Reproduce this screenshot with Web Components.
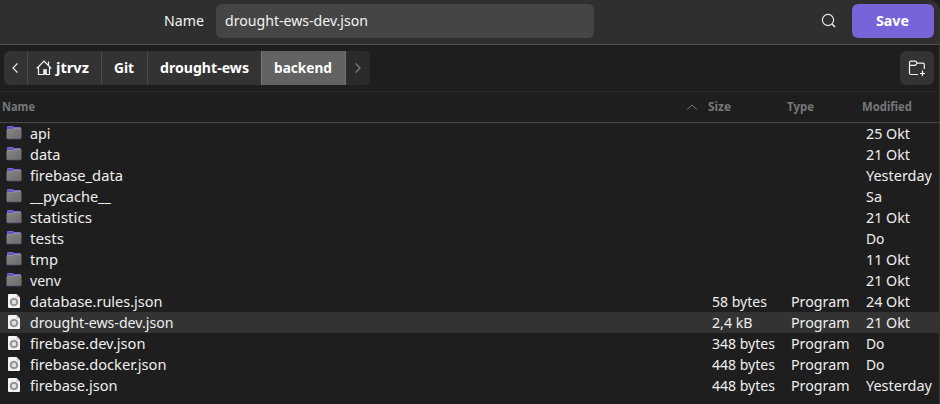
<!DOCTYPE html>
<html lang="en"><head><meta charset="utf-8"><title>Save file</title>
<style>html,body{margin:0;height:100%;overflow:hidden;background:#1e1e1e}body{font-family:"Noto Sans","Open Sans",sans-serif}</style></head>
<body><save-dialog></save-dialog>
<script>
const define=(name,html,init)=>{
  customElements.define(name,class extends HTMLElement{
    connectedCallback(){
      if(this.shadowRoot)return;
      this.attachShadow({mode:'open'}).innerHTML=typeof html==='function'?html(this):html;
      if(init)init(this);
    }
  });
};

/* Single-line label condensed or widened to the width in its w attribute */
define('fit-text',el=>`<style>:host{display:block;flex:none;width:${el.getAttribute('w')}px;white-space:nowrap}span{display:inline-block;transform-origin:0 50%}</style><span>${el.textContent}</span>`,el=>{
  const s=el.shadowRoot.querySelector('span');
  s.style.transform=`scaleX(${el.getAttribute('w')/s.getBoundingClientRect().width})`;
});

define('folder-icon',`<style>:host{display:block;width:16px;height:16px}svg{display:block}</style>
<svg width="16" height="16" viewBox="0 0 16 16"><defs><linearGradient id="g" x2="1" y2="1"><stop stop-color="#868686"/><stop offset="1" stop-color="#6b6b6b"/></linearGradient></defs>
<path d="M1 5V2Q1 1 2 1H6.8L8 2H14.2Q15 2 15 3V6H1Z" fill="#7764d8"/><path d="M1.5 3H7" stroke="#4a3da0" stroke-width=".8"/><path d="M.5 5Q.5 4.2 1.5 4.2H6.8L8.2 3.2H14.5Q15.5 3.2 15.5 4.2V13Q15.5 14 14.5 14H1.5Q.5 14 .5 13Z" fill="url(#g)"/><path d="M1.2 4.6H7L8.3 3.6H14.8" fill="none" stroke="#999" stroke-width=".7"/><path d="M1.5 14.2H14.5" stroke="#443d68" stroke-width=".7"/></svg>`);

define('file-icon',`<style>:host{display:block;width:16px;height:16px}svg{display:block}</style>
<svg width="16" height="16" viewBox="0 0 16 16"><path d="M3 1H10.5L14 4.5V14Q14 15 13 15H3Q2 15 2 14V2Q2 1 3 1Z" fill="#f4f4f4"/><path d="M10.5 1V3.6Q10.5 4.5 11.4 4.5H14Z" fill="#c8c8c8"/><circle cx="8" cy="9" r="3.2" fill="#e2e2e2" stroke="#909090" stroke-width="1.8"/><circle cx="8" cy="9" r="4.2" fill="none" stroke="#b5b5b5" stroke-width=".7" stroke-dasharray="1 1"/></svg>`);

define('title-bar',`<style>
:host{display:flex;height:44px;box-sizing:content-box;border-bottom:1px solid #4e4e4e;background:#2f2f2f;color:#f2f2f2;font-size:14.2px;padding:0 5px 0 164px;align-items:flex-start}
.label{line-height:34px;margin:4px 12px 0 0}
.field{width:369px;height:34px;margin-top:4px;padding-left:9px;border-radius:6px;background:#454545;line-height:34px}
.search{margin:13px 0 0 227px;display:block;flex:none}
.save{box-sizing:border-box;padding-right:1px;margin:4px 0 0 auto;width:82px;height:34px;border-radius:6px;background:#7764d8;color:#fff;font-weight:700;display:flex;justify-content:center;line-height:34px}
</style>
<fit-text class="label" w="40">Name</fit-text>
<div class="field"><fit-text w="143">drought-ews-dev.json</fit-text></div>
<svg class="search" width="16" height="16" fill="none" stroke="#eee" stroke-width="1.15"><circle cx="7" cy="7" r="5.6"/><path d="M10.8 10.8L14 14" stroke-width="1.6"/></svg>
<div class="save"><fit-text w="33">Save</fit-text></div>`);

define('path-bar',`<style>
:host{display:flex;height:46px;border-bottom:1px solid #272727;padding:0 5px 0 4px;color:#fff;font-size:14.2px;font-weight:700;align-items:flex-start}
.crumbs{display:flex;margin-top:6px;height:34px;border-radius:6px;overflow:hidden;background:#333;line-height:34px}
.crumbs>div{box-sizing:border-box;display:flex;justify-content:center;border-left:1px solid #4a4a4a}
.crumbs>div:first-child{border:0}
.crumbs .on{background:#626262;border-color:#757575;border-right:1px solid #707070}
.crumbs .next{background:#2a2a2a;border:0}
svg{display:block;flex:none;fill:none;stroke:#f2f2f2}
.new{margin:6px 0 0 auto;width:34px;height:34px;border-radius:6px;background:#333;display:flex;align-items:center;justify-content:center}
</style>
<div class="crumbs">
<div style="width:23px"><svg width="23" height="34" stroke-width="1.2"><path d="M13.5 12.3L9 17L13.5 21.7"/></svg></div>
<div style="width:74px;justify-content:flex-start;padding-left:8px"><svg width="16" height="34" style="margin-right:4px" stroke-width="1.2"><path d="M.7 17.5L8 10L15.3 17.5M2.5 16V23.5H7.5M13.5 16V23.5H10M12.5 14V10.5"/><path d="M7.5 18.5H10.5V23.5H7.5Z" fill="#f2f2f2" stroke-width=".6"/></svg><fit-text w="33">jtrvz</fit-text></div>
<div style="width:46px;padding-right:2px"><fit-text w="20">Git</fit-text></div>
<div style="width:114px"><fit-text w="89">drought-ews</fit-text></div>
<div class="on" style="width:85px;padding-right:1px"><fit-text w="58">backend</fit-text></div>
<div class="next" style="width:24px"><svg width="24" height="34" style="stroke:#858585" stroke-width="1.2"><path d="M9.5 12.3L14 17L9.5 21.7"/></svg></div>
</div>
<div class="new"><svg width="18" height="18" stroke-width="1.2"><path d="M10 15.5H3Q1.5 15.5 1.5 14V3.5Q1.5 2.2 3 2.2H7Q8 2.2 8.4 3.1Q8.8 4.2 9.8 4.2H14.8Q16.3 4.2 16.3 5.7V10M1.5 6.3H6.6Q7.5 6.3 8 5.4Q8.6 4.2 9.8 4.2"/><path d="M14.5 11.5V17M12 14.5H17" stroke="#fff" stroke-width="1.2"/></svg></div>`);

define('column-head',`<style>
:host{display:grid;grid-template-columns:708px 79px 75px 1fr;height:30px;border-bottom:1px solid #484848;color:#777;font-size:12px;font-weight:700;line-height:29px}
.n{display:flex;justify-content:space-between;padding:0 10px 0 2px}svg{margin-top:11px}
</style>
<div class="n"><fit-text w="33">Name</fit-text><svg width="12" height="8" fill="none" stroke="#777"><path d="M1.2 6.5L6 2L10.8 6.5"/></svg></div><fit-text w="23">Size</fit-text><fit-text w="27">Type</fit-text><fit-text w="50">Modified</fit-text>`);

define('file-row',el=>{
  const c=(k)=>{const v=el.getAttribute(k);if(!v)return '<i></i>';const[t,w]=v.split('|');return `<fit-text w="${w}">${t}</fit-text>`;};
  return `<style>:host{display:grid;grid-template-columns:24px 682px 79px 75px 1fr;padding-left:6px;height:21px;color:#efefef;font-size:14.2px;line-height:21px}:host([selected]){background:#333}.ico{padding-top:2px}</style>
  <div class="ico"><${el.getAttribute('kind')}-icon></${el.getAttribute('kind')}-icon></div>${c('name')}${c('size')}${c('type')}${c('modified')}`;
});

const W={'25 Okt':44,'21 Okt':44,'24 Okt':44,'11 Okt':44,'Yesterday':66,'Sa':16,'Do':18.5,'58 bytes':55,'2,4 kB':40.5,'348 bytes':63,'448 bytes':63};
const rows=[['api',20.5,'25 Okt'],['data',30.5,'21 Okt'],['firebase_data',93,'Yesterday'],['__pycache__',81,'Sa'],['statistics',62,'21 Okt'],['tests',34,'Do'],['tmp',28,'11 Okt'],['venv',31,'21 Okt'],
['database.rules.json',132.5,'24 Okt','58 bytes'],['drought-ews-dev.json',143.5,'21 Okt','2,4 kB'],['firebase.dev.json',115.5,'Do','348 bytes'],['firebase.docker.json',136.5,'Do','448 bytes'],['firebase.json',87.5,'Yesterday','448 bytes']];
define('file-list',`<style>:host{display:block}</style>`+rows.map(([n,w,m,s],i)=>`<file-row ${i===9?'selected':''} kind="${s?'file':'folder'}" name="${n}|${w}" modified="${m}|${W[m]}" ${s?`size="${s}|${W[s]}" type="Program|58.5"`:''}></file-row>`).join(''));

define('save-dialog',`<style>:host{display:block;box-sizing:border-box;width:940px;height:404px;background:#1e1e1e;border-right:1px solid #363636;border-top-right-radius:11px;overflow:hidden}</style>
<title-bar></title-bar><path-bar></path-bar><column-head></column-head><file-list></file-list>`);
</script></body></html>
